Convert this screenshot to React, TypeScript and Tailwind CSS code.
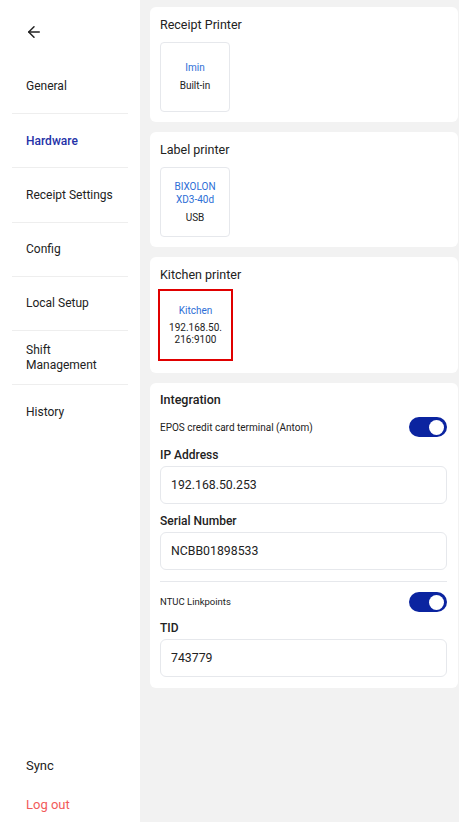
import { ArrowLeft } from 'lucide-react';

const navItems = ['General', 'Hardware', 'Receipt Settings', 'Config', 'Local Setup', 'Shift Management', 'History'];

interface Printer {
  name: string[];
  detail: string[];
  selected?: boolean;
}

function Toggle() {
  return (
    <div className="relative h-[20px] w-[38px] rounded-full bg-[#0b24a0]">
      <div className="absolute right-[3px] top-[2.5px] h-[15px] w-[15px] rounded-full bg-white" />
    </div>
  );
}

function PrinterCard({ title, printer }: { title: string; printer: Printer }) {
  return (
    <div className="rounded-[6px] bg-white pb-[10px] pl-[10px] pr-[11px] pt-[10px]">
      <div className="text-[12.5px] leading-[16px] text-[#222]">{title}</div>
      <div
        className={
          printer.selected
            ? '-ml-[2px] mb-[2px] mt-[6px] flex h-[72px] w-[75px] flex-col items-center justify-center gap-[5px] border-2 border-[#e00000] text-center'
            : 'mt-[9px] flex h-[70px] w-[70px] flex-col items-center justify-center gap-[6px] rounded-[4px] border border-[#e6e8ec] text-center'
        }
      >
        <div className="text-[10px] leading-[13px] text-[#2d6ed6]">
          {printer.name.map((n) => (
            <div key={n}>{n}</div>
          ))}
        </div>
        <div className="text-[10px] leading-[12.5px] text-[#222]">
          {printer.detail.map((d) => (
            <div key={d}>{d}</div>
          ))}
        </div>
      </div>
    </div>
  );
}

function Field({ label, value, className }: { label: string; value: string; className: string }) {
  return (
    <>
      <div className={`text-[12px] font-medium leading-[16px] text-[#222] ${className}`}>{label}</div>
      <div className="mt-[3px] flex h-[38px] items-center rounded-[6px] border border-[#e6e8ec] px-[10px] text-[12.3px] text-[#222]">
        {value}
      </div>
    </>
  );
}

export default function App() {
  return (
    <div className="flex h-[822px] w-full overflow-hidden" style={{ fontFamily: 'Roboto, "Noto Sans", sans-serif' }}>
      {/* Sidebar */}
      <div className="flex w-[140px] shrink-0 flex-col bg-white">
        <div className="flex h-[60px] items-start pl-[25px] pt-[23px]">
          <ArrowLeft className="h-[18px] w-[18px] text-[#222]" strokeWidth={2} />
        </div>
        <div className="mx-[12px]">
          {navItems.map((item, i) => (
            <div
              key={item}
              className={`flex h-[54.2px] items-center px-[14px] text-[12px] leading-[14.5px] ${
                i < navItems.length - 1 ? 'border-b border-[#eeeeee]' : ''
              } ${item === 'Hardware' ? 'font-medium text-[#2432a8]' : 'text-[#222]'}`}
            >
              {item === 'Shift Management' ? (
                <span>
                  Shift
                  <br />
                  Management
                </span>
              ) : (
                item
              )}
            </div>
          ))}
        </div>
        <div className="mt-auto flex flex-col gap-[23px] pb-[9px] pl-[26px]">
          <div className="text-[13px] leading-[16px] text-[#222]">Sync</div>
          <div className="text-[13px] leading-[16px] text-[#f25a5a]">Log out</div>
        </div>
      </div>

      {/* Content */}
      <div className="flex flex-1 flex-col gap-[10px] bg-[#f2f2f2] pl-[10px] pr-px pt-[7px]">
        <PrinterCard title="Receipt Printer" printer={{ name: ['Imin'], detail: ['Built-in'] }} />
        <PrinterCard title="Label printer" printer={{ name: ['BIXOLON', 'XD3-40d'], detail: ['USB'] }} />
        <PrinterCard
          title="Kitchen printer"
          printer={{ name: ['Kitchen'], detail: ['192.168.50.', '216:9100'], selected: true }}
        />

        <div className="flex flex-col rounded-[6px] bg-white pb-[11px] pl-[10px] pr-[11px] pt-[9px]">
          <div className="text-[12.5px] font-medium leading-[16px] text-[#222]">Integration</div>
          <div className="mt-[9px] flex h-[20px] items-center justify-between">
            <span className="text-[10px] text-[#222]">EPOS credit card terminal (Antom)</span>
            <Toggle />
          </div>
          <Field label="IP Address" value="192.168.50.253" className="mt-[10px]" />
          <Field label="Serial Number" value="NCBB01898533" className="mt-[9px]" />
          <div className="mt-[11px] h-px bg-[#e6e8ec]" />
          <div className="mt-[10px] flex h-[20px] items-center justify-between">
            <span className="text-[9.5px] text-[#222]">NTUC Linkpoints</span>
            <Toggle />
          </div>
          <Field label="TID" value="743779" className="mt-[8px]" />
        </div>
      </div>
    </div>
  );
}
